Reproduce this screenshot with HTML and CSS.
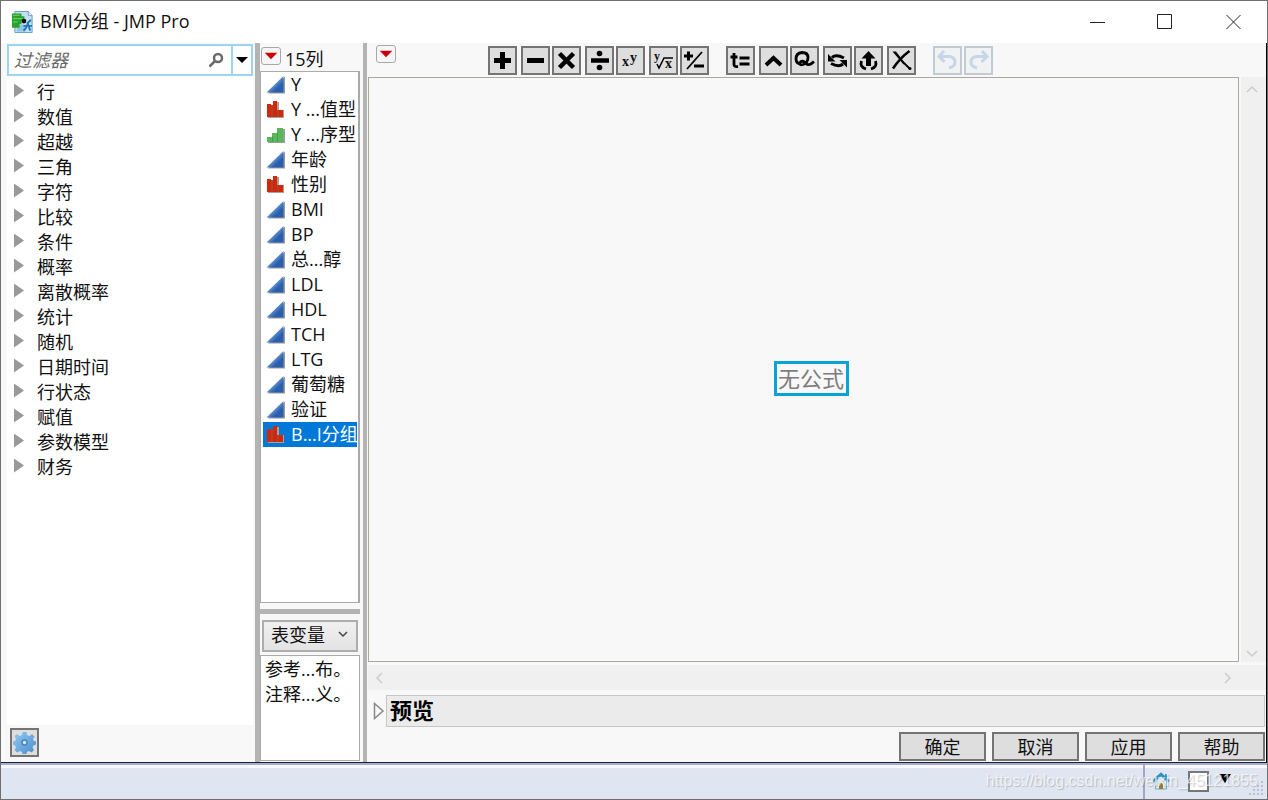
FILE: index.html
```html
<!DOCTYPE html>
<html lang="zh-CN">
<head>
<meta charset="utf-8">
<title>BMI分组 - JMP Pro</title>
<link rel="stylesheet" href="styles.css">
</head>
<body>
<svg class="defs" aria-hidden="true">
  <defs>
    <linearGradient id="blue" x1="0" y1="0" x2="1" y2="1"><stop offset=".4" stop-color="#6f9fda"/><stop offset=".7" stop-color="#2a5fae"/></linearGradient>
    <linearGradient id="gearfill" x1="0" y1="0" x2="1" y2="1"><stop offset="0" stop-color="#93caf2"/><stop offset="1" stop-color="#4a8ccc"/></linearGradient>
    <symbol id="cont" viewBox="0 0 20 20"><path d="M2 18.500L19 1.500v17z" fill="#9a9a9a"/><path d="M.5 17.500L17.500 1v16.500z" fill="url(#blue)"/></symbol>
    <symbol id="nom" viewBox="0 0 20 20"><path d="M2 5h5V2h6v8h5v8H2z" fill="#a9a098"/><path d="M1 4h4v13H1zM7 1h4v16H7zM13 10h4v7h-4z" fill="#d92506"/><path d="M5 5h2v12H5zM11 10h2v7h-2z" fill="#9c4a38"/></symbol>
    <symbol id="ord" viewBox="0 0 20 20"><path d="M2 13h5v-3h5V4h7v14H2z" fill="#93a093"/><path d="M1 12h5V8h5V3h6v14H1z" fill="#58b85a"/><path d="M6.500 11v6M11.500 7v10" stroke="#4a9d50"/></symbol>
    <symbol id="red" viewBox="0 0 20 17"><path d="M3 5h14l-7 7z" fill="#c8000c"/></symbol>
  </defs>
</svg>
<div class="window">
  <header class="titlebar">
    <svg class="logo" viewBox="0 0 24 24"><path d="M4 1h14l4 4v18H4z" fill="#c4e0f3" stroke="#6a9bc3"/><path d="M18 1v4h4" fill="#fff" stroke="#6a9bc3"/><path d="M6 17l5-3 4 2v6H6z" fill="#8cc6e8"/><path d="M1 3h10v3h3v5h-3v3H9v4H1z" fill="#27a32b"/><path d="M2 5h7M2 8.500h10M2 12h5" stroke="#7ad676"/><circle cx="13.500" cy="11" r="2.500" fill="#111"/><path d="M21 10q-3 1-4 5t-4 6M13 16h9M17 12l3 9" stroke="#2478ae" stroke-width="2" fill="none"/></svg>
    <h1 class="title">BMI分组 - JMP Pro</h1>
    <div class="winctl">
      <button class="wbtn" aria-label="最小化"><svg viewBox="0 0 16 16"><path d="M1 8.500h15"/></svg></button>
      <button class="wbtn" aria-label="最大化"><svg viewBox="0 0 16 16"><path d="M.5 .5h14v14H.5z"/></svg></button>
      <button class="wbtn" aria-label="关闭"><svg viewBox="0 0 16 16"><path d="M1.500 1l14 14M15.500 1l-14 14"/></svg></button>
    </div>
  </header>
  <main class="main">
    <section class="functions">
      <div class="filter">
        <input class="filter-input" type="text" placeholder="过滤器" aria-label="过滤器">
        <svg class="search" viewBox="0 0 16 16"><circle cx="10" cy="6" r="4" /><path d="M7 9l-5.500 5.500"/></svg>
        <button class="filter-menu" aria-label="过滤选项"><svg viewBox="0 0 12 8"><path d="M0 1h12L6 7z"/></svg></button>
      </div>
      <ul class="tree">
        <li>行</li><li>数值</li><li>超越</li><li>三角</li><li>字符</li><li>比较</li><li>条件</li><li>概率</li><li>离散概率</li><li>统计</li><li>随机</li><li>日期时间</li><li>行状态</li><li>赋值</li><li>参数模型</li><li>财务</li>
      </ul>
      <div class="functions-foot">
        <button class="tool gear" aria-label="设置"><svg viewBox="0 0 25 25"><path d="M10.500 2h4l.5 3 2.500 1 2.500-2 2.500 2.500-1.500 2.500 1 2 2 .5v3l-2.500 1-1 2 1.500 2.500-2.500 2.500-2.500-1.500-2 1-.5 2h-4l-.5-2-2-1L5 22.500 2.500 20 4 17.500l-1-2L1 14.500v-3L3 11l1-2-1.500-3L5 4l2.500 2L10 5z" fill="url(#gearfill)"/><circle cx="12.500" cy="12.500" r="2.500" fill="#d6e6f2" stroke="#4a86bd" stroke-width="1.500"/></svg></button>
      </div>
    </section>
    <div class="split"></div>
    <section class="columns">
      <div class="columns-head"><button class="redtri" aria-label="列菜单"><svg viewBox="0 0 20 17"><use href="#red"/></svg></button><span>15列</span></div>
      <ul class="collist">
        <li><svg><use href="#cont"/></svg>Y</li>
        <li><svg><use href="#nom"/></svg>Y ...值型</li>
        <li><svg><use href="#ord"/></svg>Y ...序型</li>
        <li><svg><use href="#cont"/></svg>年龄</li>
        <li><svg><use href="#nom"/></svg>性别</li>
        <li><svg><use href="#cont"/></svg>BMI</li>
        <li><svg><use href="#cont"/></svg>BP</li>
        <li><svg><use href="#cont"/></svg>总...醇</li>
        <li><svg><use href="#cont"/></svg>LDL</li>
        <li><svg><use href="#cont"/></svg>HDL</li>
        <li><svg><use href="#cont"/></svg>TCH</li>
        <li><svg><use href="#cont"/></svg>LTG</li>
        <li><svg><use href="#cont"/></svg>葡萄糖</li>
        <li><svg><use href="#cont"/></svg>验证</li>
        <li class="selected"><svg><use href="#nom"/></svg>B...I分组</li>
      </ul>
      <div class="hsplit"></div>
      <div class="varbox">
        <select class="varsel" aria-label="变量类型"><option>表变量</option></select>
        <svg class="varchev" viewBox="0 0 10 10"><path d="M1 2l4 4 4-4"/></svg>
      </div>
      <ul class="varlist"><li>参考...布。</li><li>注释...义。</li></ul>
    </section>
    <div class="split thin"></div>
    <section class="editor">
      <div class="toolbar">
        <button class="redtri" aria-label="公式菜单"><svg viewBox="0 0 20 17"><use href="#red"/></svg></button>
        <div class="tools">
          <div class="group">
            <div class="pair"><button class="tool" aria-label="加"><svg viewBox="0 0 25 25"><path d="M12.500 4v17M4 12.500h17" stroke-width="5"/></svg></button></div>
            <div class="pair"><button class="tool" aria-label="减"><svg viewBox="0 0 25 25"><path d="M4 12.500h17" stroke-width="5"/></svg></button>
            <button class="tool" aria-label="乘"><svg viewBox="0 0 25 25"><path d="M5.500 5.500l14 14M19.500 5.500l-14 14" stroke-width="4.500"/></svg></button></div>
            <div class="pair"><button class="tool" aria-label="除"><svg viewBox="0 0 25 25"><path d="M4 12.500h18" stroke-width="4.500"/><circle cx="12.500" cy="5.500" r="2.800" class="f"/><circle cx="12.500" cy="19.500" r="2.800" class="f"/></svg></button>
            <button class="tool" aria-label="幂"><svg viewBox="0 0 25 25"><text x="4" y="18" font-size="14">x</text><text x="12" y="14" font-size="14">y</text></svg></button></div>
            <div class="pair"><button class="tool" aria-label="根"><svg viewBox="0 0 25 25"><text x="3" y="12" font-size="12">y</text><text x="14" y="20" font-size="14">x</text><path d="M6 16l2 4 5-10h9" stroke-width="1.500"/></svg></button>
            <button class="tool" aria-label="正负"><svg viewBox="0 0 25 25"><path d="M2 8h9M6.500 3.500v9M12 18h10" stroke-width="3"/><path d="M20 4L5 21" stroke-width="1.800"/></svg></button></div>
          </div>
          <div class="group">
            <div class="pair"><button class="tool" aria-label="局部变量"><svg viewBox="0 0 25 25"><path d="M6 5v11.500q0 2.500 4 2M2.500 9h7" stroke-width="2.800"/><path d="M11.500 10h10M11.500 16h10" stroke-width="3"/></svg></button></div>
            <div class="pair"><button class="tool" aria-label="插入"><svg viewBox="0 0 25 25"><path d="M5 17l7.500-7 7.500 7" stroke-width="4"/></svg></button>
            <button class="tool" aria-label="圈选"><svg viewBox="0 0 25 25"><path d="M8 16q-4-1-4-5 0-6 6-6.500 6 0 6 5 0 5-5 7-4 1-3-2 2-3 6 1 3 3 8-2" stroke-width="2.800"/></svg></button></div>
            <div class="pair"><button class="tool" aria-label="交换"><svg viewBox="0 0 25 25"><path d="M7 9.500q4-3.500 12 .5M18 16q-4 3.500-12-.5" stroke-width="3"/><path d="M3 6v7.500h7.500zM22 19.500V12h-7.500z" class="f"/></svg></button>
            <button class="tool" aria-label="提取"><svg viewBox="0 0 25 25"><path d="M12.500 3l7 7.500H15V18h-5v-7.500H5.500z" class="f"/><path d="M5.500 13q-2 6 4.500 8M19.500 13q2 6-4.500 8" stroke-width="2.800"/></svg></button></div>
            <div class="pair"><button class="tool" aria-label="删除"><svg viewBox="0 0 25 25"><path d="M3.500 3.500h3.500L16 15l-1.500 1.500z" class="f"/><path d="M20.500 3Q11 10 4 20.500" stroke-width="2.500"/><path d="M15 15l6 6" stroke-width="1.800"/><circle cx="21" cy="20.500" r="1.500" class="f"/></svg></button></div>
          </div>
          <div class="group">
            <div class="pair"><button class="tool off" aria-label="撤销" disabled><svg viewBox="0 0 25 25"><path d="M9 3L4 8.500l5.500 5.500M4 8.500h11q5 1 5 6 0 4-6 5.500" stroke-width="3"/></svg></button>
            <button class="tool off" aria-label="重做" disabled><svg viewBox="0 0 25 25"><path d="M16 3l5 5.500-5.500 5.500M21 8.500H10q-5 1-5 6 0 4 6 5.500" stroke-width="3"/></svg></button></div>
          </div>
        </div>
      </div>
      <div class="canvas-grid">
        <div class="canvas"><div class="empty" tabindex="0">无公式</div></div>
        <div class="vscroll"><svg viewBox="0 0 12 8"><path d="M1 7l5-5 5 5"/></svg><svg viewBox="0 0 12 8"><path d="M1 1l5 5 5-5"/></svg></div>
        <div class="hscroll"><svg viewBox="0 0 8 12"><path d="M7 1L2 6l5 5"/></svg><svg viewBox="0 0 8 12"><path d="M1 1l5 5-5 5"/></svg></div>
      </div>
      <div class="preview">
        <button class="disclose" aria-label="展开预览"><svg viewBox="0 0 12 18"><path d="M1.500 1.500v15L10 9z"/></svg></button>
        <h2 class="preview-title">预览</h2>
      </div>
      <div class="actions">
        <button class="action">确定</button><button class="action">取消</button><button class="action">应用</button><button class="action">帮助</button>
      </div>
    </section>
  </main>
  <footer class="status">
    <div class="status-tools">
      <svg class="home" viewBox="0 0 18 18"><path d="M3.500 9v8h11V9L9 4z" fill="#d9eef8" stroke="#6fa9c8"/><path d="M1 9.500L9 2l8 7.500" fill="none" stroke="#2b93c4" stroke-width="2.500"/><path d="M13 2h2v4h-2z" fill="#2b93c4"/><path d="M7 17v-5q2-3 4 0v5z" fill="#a17a2d"/></svg>
      <input type="checkbox" class="check" aria-label="窗口选择">
      <svg class="drop" viewBox="0 0 12 10"><path d="M0 0h12L6 9z"/></svg>
    </div>
    <span class="watermark">https://blog.csdn.net/weixin_45121855</span>
    <svg class="grip" viewBox="0 0 16 16"><path d="M12 0h2v2h-2zM8 4h2v2H8zM12 4h2v2h-2zM4 8h2v2H4zM8 8h2v2H8zM12 8h2v2h-2zM0 12h2v2H0zM4 12h2v2H4zM8 12h2v2H8zM12 12h2v2h-2z"/></svg>
  </footer>
</div>
</body>
</html>
```

FILE: styles.css
```css
* { box-sizing: border-box; }
body {
  margin: 0;
  font-family: "Open Sans", "Noto Sans CJK SC", sans-serif;
  font-size: 18px;
  line-height: 25px;
  color: #111;
}
button, input, select { font: inherit; color: inherit; margin: 0; padding: 0; border-radius: 0; }
ul { list-style: none; margin: 0; padding: 0; }
svg { display: block; flex: none; }
.defs { position: absolute; width: 0; height: 0; }
.window {
  display: flex;
  flex-direction: column;
  height: 100vh;
  border: 1px solid #706f70;
  background: #f8f8f8;
}
.titlebar { display: flex; align-items: center; height: 42px; padding-left: 10px; background: #fff; }
.logo { width: 23px; height: 24px; }
.title { flex: 1; margin: 0 0 2px 6px; font-size: 18px; font-weight: 400; }
.winctl { display: flex; }
.wbtn { display: flex; justify-content: center; align-items: center; width: 68px; height: 42px; border: 0; background: none; }
.wbtn svg { width: 16px; height: 16px; fill: none; stroke: #222; }

.main { flex: 1; display: flex; min-height: 0; border-right: 1px solid #000; border-bottom: 1px solid #222; }
.functions { flex: none; width: 254px; display: flex; flex-direction: column; padding: 1px 2px 0 6px; }
.filter { display: flex; align-items: center; height: 32px; border: 2px solid #9bd5f3; background: #fff; }
.filter-input { flex: 1; min-width: 0; height: 28px; padding-left: 5px; border: 0; outline: 0; background: none; font-style: italic; }
.filter-input::placeholder { color: #6a6a6a; opacity: 1; }
.search { width: 16px; height: 16px; margin-right: 7px; fill: none; stroke: #6a6a6a; stroke-width: 2.500; }
.filter-menu { display: flex; align-items: center; justify-content: center; width: 20px; height: 28px; border: 0; border-left: 2px solid #9bd5f3; background: #fff; }
.filter-menu svg { width: 12px; height: 8px; }
.tree { flex: 1; padding: 4px 0 0 7px; background: #fff; }
.tree li { display: flex; align-items: center; }
.tree li::before { content: ""; width: 10px; height: 14px; margin: 0 13px 4px 0; background: #999; clip-path: polygon(0 0, 100% 50%, 0 100%); }
.functions-foot { height: 37px; padding: 3px; }

.split { flex: none; width: 5px; background: #b3b3b3; }
.split.thin { width: 4px; margin-left: 3px; }
.columns { flex: none; width: 100px; display: flex; flex-direction: column; }
.columns-head { display: flex; gap: 4px; height: 28px; padding: 4px 0 0 1px; }
.redtri { flex: none; width: 20px; height: 18px; border: 1px solid #a8a8a8; border-radius: 3px; background: #f6f6f6; }
.redtri svg { width: 18px; height: 16px; }
.collist { flex: 1; padding: 0 1px; border: 1px solid #aaa; border-right-width: 2px; background: #fff; overflow: hidden; }
.collist li { display: flex; align-items: center; gap: 5px; padding-left: 3px; margin-left: 1px; white-space: nowrap; }
.collist svg { width: 20px; height: 20px; }
.selected { background: #0078d7; color: #fff; }
.hsplit { height: 5px; margin: 6px 0; background: #b3b3b3; }
.varbox { position: relative; margin: 0 2px 3px; }
.varsel { appearance: none; width: 100%; height: 32px; padding: 0 0 1px 7px; border: 2px solid #adadad; background: linear-gradient(#f0f0f0, #e3e3e3); }
.varchev { position: absolute; right: 10px; top: 10px; width: 10px; height: 10px; fill: none; stroke: #444; stroke-width: 1.500; }
.varlist { height: 106px; margin-bottom: 1px; padding: 1px 4px; border: 1px solid #aaa; background: #fff; white-space: nowrap; overflow: hidden; }

.editor { flex: 1; min-width: 0; display: flex; flex-direction: column; padding-left: 1px; }
.toolbar { display: flex; height: 34px; padding: 2px 0 0 8px; }
.tools { display: flex; gap: 17px; margin: 1px 0 0 92px; }
.group { display: flex; gap: 4px; }
.pair { display: flex; gap: 2px; }
.tool { width: 29px; height: 29px; border: 2px solid #747474; background: #dedede; }
.tool svg { width: 25px; height: 25px; fill: none; stroke: #000; }
.tool text { fill: #111; stroke: none; font-family: "Liberation Serif", serif; font-weight: 700; }
.tool .f { fill: #000; stroke: none; }
.gear svg { stroke: none; }
.off { border-color: #c2cbd2; background: #f1f2f3; }
.off svg { stroke: #c5d6e8; }
.canvas-grid { flex: 1; min-height: 0; display: grid; grid-template-columns: 1fr 25px; grid-template-rows: 1fr 25px; gap: 3px 2px; }
.canvas { display: flex; align-items: center; justify-content: center; padding: 17px 0 0 16px; border: 1px solid #a9a9a2; }
.empty { padding: 0 2px 0 1px; border: 3px solid #06a5d6; font-size: 22px; line-height: 29px; color: #7d7d7d; outline: 0; }
.vscroll { display: flex; flex-direction: column; justify-content: space-between; align-items: center; padding: 8px 3px 4px 0; background: #f0f0f0; }
.hscroll { grid-column: 1 / -1; display: flex; justify-content: space-between; align-items: center; padding: 0 34px 0 7px; background: #f0f0f0; }
.vscroll svg { width: 12px; height: 8px; fill: none; stroke: #ccc; stroke-width: 1.500; }
.hscroll svg { width: 8px; height: 12px; fill: none; stroke: #ccc; stroke-width: 1.500; }
.preview { display: flex; align-items: center; margin: 5px 1px 0 5px; }
.disclose { width: 13px; height: 20px; border: 0; background: none; }
.disclose svg { width: 12px; height: 18px; fill: none; stroke: #888; stroke-width: 1.500; }
.preview-title { flex: 1; margin: 0; padding: 0 0 2px 3px; border: 1px solid #c6c6c6; background: #ebebeb; font-size: 22px; line-height: 28px; color: #000; }
.actions { display: flex; justify-content: flex-end; gap: 6px; padding: 5px 1px 1px; }
.action { width: 87px; height: 29px; border: 2px solid #747474; background: #dedede; line-height: 24px; }

.status { position: relative; display: flex; justify-content: flex-end; height: 36px; border-top: 2px solid #a3addb; background: #dfe6f1; box-shadow: inset 0 3px #f8f9fc; }
.status-tools { display: flex; align-items: center; gap: 10px; width: 124px; padding: 0 0 2px 7px; border-left: 2px solid #a5a5bd; }
.home { width: 18px; height: 18px; }
.check { appearance: none; width: 21px; height: 21px; margin-left: 8px; border: 2px solid #777; background: #fff; }
.drop { width: 12px; height: 10px; margin-bottom: 5px; }
.watermark { position: absolute; right: 9px; top: 3px; font-family: "Liberation Sans", sans-serif; font-size: 16px; color: rgba(255, 255, 255, 0.7); text-shadow: 1px 1px 1px rgba(120, 120, 120, 0.4); }
.grip { position: absolute; right: 2px; bottom: 2px; width: 16px; height: 16px; fill: #b9c0d6; }
```
